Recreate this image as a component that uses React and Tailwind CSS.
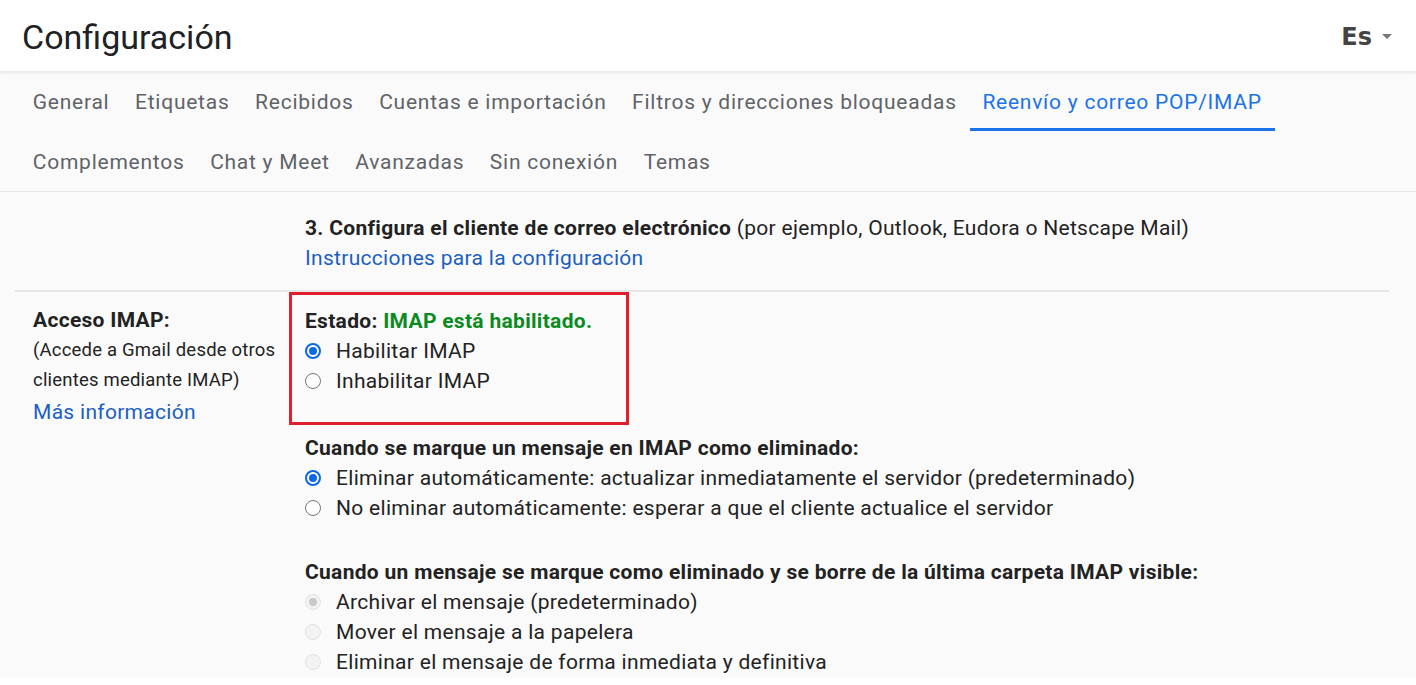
import React from 'react';

const tabsRow1 = ['General', 'Etiquetas', 'Recibidos', 'Cuentas e importación', 'Filtros y direcciones bloqueadas', 'Reenvío y correo POP/IMAP'];
const tabsRow2 = ['Complementos', 'Chat y Meet', 'Avanzadas', 'Sin conexión', 'Temas'];
const ACTIVE = 'Reenvío y correo POP/IMAP';

function Radio({ checked, disabled, label }) {
  let circle;
  if (disabled) {
    circle = (
      <span className="flex h-[16px] w-[16px] items-center justify-center rounded-full border border-[#e2e2e2] bg-[#f3f3f3]">
        {checked && <span className="h-[8px] w-[8px] rounded-full bg-[#c8c8c8]" />}
      </span>
    );
  } else if (checked) {
    circle = (
      <span className="flex h-[16px] w-[16px] items-center justify-center rounded-full border-2 border-[#0b67e6] bg-white">
        <span className="h-[8px] w-[8px] rounded-full bg-[#0b67e6]" />
      </span>
    );
  } else {
    circle = <span className="h-[16px] w-[16px] rounded-full border border-[#767676] bg-white" />;
  }
  return (
    <div className="flex h-[30px] items-center">
      <span className="flex w-[31px] shrink-0">{circle}</span>
      <span className="text-[#222]">{label}</span>
    </div>
  );
}

function Tab({ name }) {
  const active = name === ACTIVE;
  return (
    <div
      className={`flex h-[60px] items-center px-[12.8px] pt-[6px] border-b-[3px] ${
        active ? 'border-[#1a73e8] text-[#1a73e8]' : 'border-transparent text-[#5f6368]'
      }`}
    >
      {name}
    </div>
  );
}

export default function App() {
  return (
    <div className="h-[685px] w-[1416px] overflow-hidden bg-white" style={{ fontFamily: 'Roboto, "Liberation Sans", sans-serif' }}>
      {/* Header */}
      <div className="relative z-10 flex h-[71px] items-center justify-between bg-white pl-[22px] pr-[24px] shadow-[0_2px_3px_rgba(0,0,0,0.08)]">
        <h1 className="pt-[4px] text-[34px] text-[#202124]">Configuración</h1>
        <div className="flex items-center gap-[10px] pt-[3px]">
          <span className="text-[24px] font-bold text-[#444]" style={{ fontFamily: '"DejaVu Sans", sans-serif' }}>Es</span>
          <svg width="10" height="6" viewBox="0 0 10 6"><path d="M0 0h10L5 5z" fill="#777" /></svg>
        </div>
      </div>

      {/* Tabs */}
      <div className="border-b border-[#e8e8e8] bg-[#fafafa] pl-[20px] text-[21px] tracking-[0.75px]">
        <div className="flex">
          {tabsRow1.map((t) => <Tab key={t} name={t} />)}
        </div>
        <div className="flex">
          {tabsRow2.map((t) => <Tab key={t} name={t} />)}
        </div>
      </div>

      {/* Content */}
      <div className="bg-[#fafafa] pl-[15px] pr-[27px] text-[21px] leading-[30px] tracking-[0.3px] text-[#222]">
        <div className="flex pt-[21px] pb-[17px]">
          <div className="w-[290px] shrink-0" />
          <div>
            <div>
              <span className="font-bold">3. Configura el cliente de correo electrónico</span> (por ejemplo, Outlook, Eudora o Netscape Mail)
            </div>
            <div className="text-[#1a5fc4]">Instrucciones para la configuración</div>
          </div>
        </div>

        <div className="flex border-t-2 border-[#e6e6e6]">
          <div className="w-[274px] shrink-0 pl-[18px] pt-[13px]">
            <div className="font-bold">Acceso IMAP:</div>
            <div className="text-[18.5px] tracking-[0.2px] text-[#222]">(Accede a Gmail desde otros</div>
            <div className="text-[18.5px] tracking-[0.2px] text-[#222]">clientes mediante IMAP)</div>
            <div className="pt-[2px] text-[#1a5fc4]">Más información</div>
          </div>
          <div>
            <div className="h-[133px] w-[340px] border-[3px] border-[#e01e2d] pl-[13px] pt-[11px]">
              <div className="font-bold">
                Estado: <span className="text-[#0b8a1f]">IMAP está habilitado.</span>
              </div>
              <Radio checked label="Habilitar IMAP" />
              <Radio label="Inhabilitar IMAP" />
            </div>
            <div className="pl-[16px] pt-[8px]">
              <div className="font-bold">Cuando se marque un mensaje en IMAP como eliminado:</div>
              <Radio checked label="Eliminar automáticamente: actualizar inmediatamente el servidor (predeterminado)" />
              <Radio label="No eliminar automáticamente: esperar a que el cliente actualice el servidor" />
              <div className="h-[34px]" />
              <div className="font-bold">Cuando un mensaje se marque como eliminado y se borre de la última carpeta IMAP visible:</div>
              <Radio disabled checked label="Archivar el mensaje (predeterminado)" />
              <Radio disabled label="Mover el mensaje a la papelera" />
              <Radio disabled label="Eliminar el mensaje de forma inmediata y definitiva" />
            </div>
          </div>
        </div>
      </div>
    </div>
  );
}
